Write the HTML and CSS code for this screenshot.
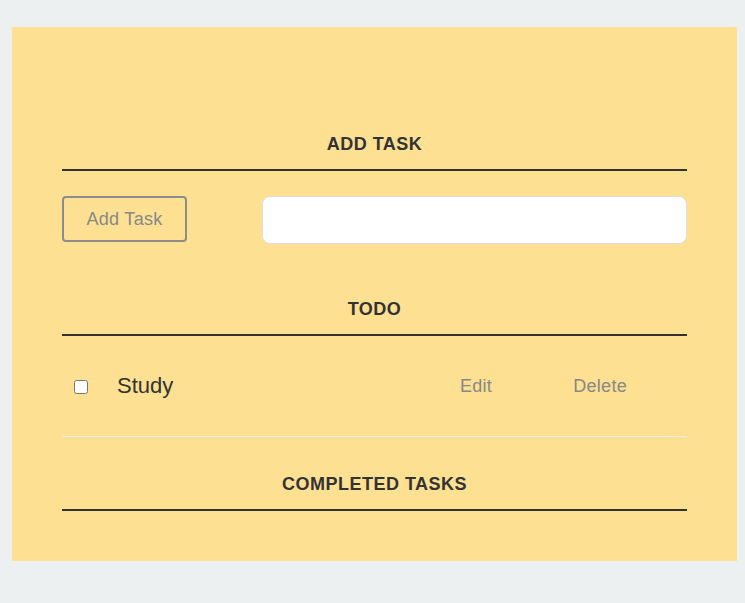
FILE: index.html
```html
<!DOCTYPE html>
<html>
<head>
<meta charset="utf-8">
<link rel="stylesheet" href="styles.css">
</head>
<body>
<div class="app">
  <h3 class="heading">Add Task</h3>
  <div class="add-row">
    <button class="add-btn">Add Task</button>
    <input class="add-input" type="text">
  </div>
  <h3 class="heading todo-heading">Todo</h3>
  <ul class="list">
    <li class="item">
      <input type="checkbox" class="check">
      <label class="label">Study</label>
      <button class="link edit">Edit</button>
      <button class="link delete">Delete</button>
    </li>
  </ul>
  <h3 class="heading done-heading">Completed Tasks</h3>
  <ul class="list"></ul>
</div>
</body>
</html>
```
FILE: styles.css
```css
html, body {
  margin: 0;
  padding: 0;
  background: #ecf0f1;
  font-family: "Liberation Sans", Arial, sans-serif;
}
body {
  padding-top: 27px;
  height: 603px;
  box-sizing: border-box;
}
.app {
  margin: 0 8px 0 12px;
  background: #fde092;
  padding: 107px 50px 50px;
}
.heading {
  margin: 0;
  font-size: 18px;
  line-height: 21px;
  font-weight: bold;
  letter-spacing: 0.5px;
  text-transform: uppercase;
  text-align: center;
  color: #333;
  padding-bottom: 14px;
  border-bottom: 2px solid #333;
}
.add-row {
  display: flex;
  justify-content: space-between;
  align-items: flex-start;
  margin-top: 25px;
}
.add-btn {
  width: 125px;
  height: 46px;
  box-sizing: border-box;
  border: 2px solid #8c8c8c;
  border-radius: 4px;
  background: transparent;
  color: #888;
  font-family: "Liberation Sans", Arial, sans-serif;
  font-size: 18px;
  letter-spacing: 0.3px;
  padding: 0;
}
.add-input {
  width: 425px;
  height: 48px;
  box-sizing: border-box;
  border: 1px solid #dcdfe3;
  border-radius: 8px;
  background: #fff;
  margin: 0;
}
.todo-heading {
  margin-top: 55px;
}
.done-heading {
  margin-top: 37px;
}
.list {
  list-style: none;
  margin: 0;
  padding: 0;
}
.item {
  display: flex;
  align-items: center;
  height: 100px;
  padding-left: 8px;
  border-bottom: 1px solid #ececec;
}
.check {
  width: 14px;
  height: 14px;
  margin: 2px 3px 0 4px;
}
.label {
  flex: 1;
  margin-left: 26px;
  font-size: 22px;
  color: #333;
}
.link {
  background: none;
  border: none;
  padding: 0;
  font-family: "Liberation Sans", Arial, sans-serif;
  font-size: 18px;
  letter-spacing: 0.3px;
  color: #888;
}
.edit {
  margin-right: 81px;
}
.delete {
  margin-right: 60px;
}
```
